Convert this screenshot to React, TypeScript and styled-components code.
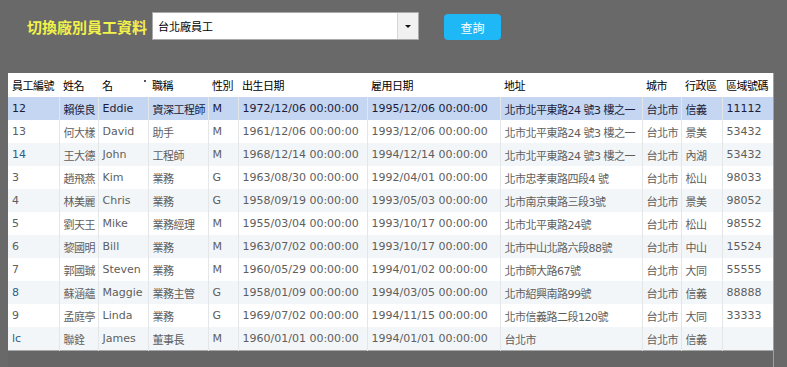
import React, { useState } from "react";
import styled, { createGlobalStyle } from "styled-components";

const GlobalStyle = createGlobalStyle`
  html, body {
    margin: 0;
    padding: 0;
    background: #696969;
    height: 100%;
    overflow: hidden;
  }
  body {
    font-family: "DejaVu Sans", "Noto Sans CJK TC", sans-serif;
  }
`;

const Page = styled.div`
  display: flex;
  flex-direction: column;
  height: 100vh;
  padding-top: 12px;
  box-sizing: border-box;
`;

const Toolbar = styled.div`
  display: flex;
  align-items: center;
  height: 28px;
  padding-left: 27px;
`;

const Title = styled.span`
  font-family: "Noto Sans CJK TC", sans-serif;
  font-size: 15px;
  font-weight: bold;
  color: #f2f24a;
  margin-right: 5px;
`;

const Select = styled.div`
  display: flex;
  width: 267px;
  height: 28px;
  box-sizing: border-box;
  border: 1px solid #a9a9a9;
  background: #fff;
`;

const SelectValue = styled.div`
  flex: 1;
  display: flex;
  align-items: center;
  padding-left: 5px;
  font-family: "Noto Sans CJK TC", sans-serif;
  font-size: 11px;
  color: #000;
`;

const SelectArrow = styled.div`
  width: 20px;
  border-left: 1px solid #d6d6d6;
  background: #f1f1f1;
  display: flex;
  align-items: center;
  justify-content: center;

  &::after {
    content: "";
    border-left: 3px solid transparent;
    border-right: 3px solid transparent;
    border-top: 3px solid #111;
  }
`;

const Button = styled.button`
  margin-left: 25px;
  margin-top: 2px;
  width: 57px;
  height: 26px;
  border: none;
  border-radius: 4px;
  background: #1fb8f6;
  color: #fff;
  font-family: "Noto Sans CJK TC", sans-serif;
  font-size: 12px;
  padding: 0;
`;

const Grid = styled.div`
  margin: 33px 0 0 8px;
  width: 766px;
  flex: 1;
  box-sizing: border-box;
  border-right: 1px solid #a0a0a0;
  background: #666;
  overflow: hidden;
`;

const Table = styled.table`
  width: 765px;
  table-layout: fixed;
  border-collapse: collapse;
  font-size: 11px;
  border-bottom: 1px solid #a8a8a8;
`;

const HeadCell = styled.th`
  height: 24px;
  padding: 0 0 0 4px;
  background: #fff;
  color: #000;
  font-weight: normal;
  text-align: left;
  white-space: nowrap;
  overflow: hidden;
  letter-spacing: -0.5px;
  position: relative;
`;

const SortMark = styled.span`
  position: absolute;
  right: 2px;
  top: 7px;
  width: 2px;
  height: 2px;
  background: #555;
`;

const Row = styled.tr<{ $alt: boolean; $selected: boolean }>`
  background: ${(p) => (p.$selected ? "#c4d6f1" : p.$alt ? "#f3f6f8" : "#fff")};
  color: ${(p) => (p.$selected ? "#1c1c3a" : "#5e5e5e")};
`;

const Cell = styled.td<{ $link?: boolean; $cjk?: boolean }>`
  height: 23px;
  padding: 0 0 0 4px;
  border-left: 1px solid #e4e6e8;
  white-space: nowrap;
  overflow: hidden;
  letter-spacing: ${(p) => (p.$cjk ? "-0.5px" : "normal")};
  color: ${(p) => (p.$link ? "#2f5d8c" : "inherit")};

  &:first-child {
    border-left: none;
  }
`;

const columns = [
  { title: "員工編號", width: 51 },
  { title: "姓名", width: 39, cjk: true },
  { title: "名", width: 50, mark: true },
  { title: "職稱", width: 60, cjk: true },
  { title: "性別", width: 30 },
  { title: "出生日期", width: 129 },
  { title: "雇用日期", width: 133 },
  { title: "地址", width: 142, cjk: true },
  { title: "城市", width: 39, cjk: true },
  { title: "行政區", width: 41, cjk: true },
  { title: "區域號碼", width: 51 },
];

const rows = [
  ["12", "賴俟良", "Eddie", "資深工程師", "M", "1972/12/06 00:00:00", "1995/12/06 00:00:00", "北市北平東路24 號3 樓之一", "台北市", "信義", "11112"],
  ["13", "何大樣", "David", "助手", "M", "1961/12/06 00:00:00", "1993/12/06 00:00:00", "北市北平東路24 號3 樓之一", "台北市", "景美", "53432"],
  ["14", "王大德", "John", "工程師", "M", "1968/12/14 00:00:00", "1994/12/14 00:00:00", "北市北平東路24 號3 樓之一", "台北市", "內湖", "53432"],
  ["3", "趙飛燕", "Kim", "業務", "G", "1963/08/30 00:00:00", "1992/04/01 00:00:00", "北市忠孝東路四段4 號", "台北市", "松山", "98033"],
  ["4", "林美麗", "Chris", "業務", "G", "1958/09/19 00:00:00", "1993/05/03 00:00:00", "北市南京東路三段3號", "台北市", "景美", "98052"],
  ["5", "劉天王", "Mike", "業務經理", "M", "1955/03/04 00:00:00", "1993/10/17 00:00:00", "北市北平東路24號", "台北市", "松山", "98552"],
  ["6", "黎國明", "Bill", "業務", "M", "1963/07/02 00:00:00", "1993/10/17 00:00:00", "北市中山北路六段88號", "台北市", "中山", "15524"],
  ["7", "郭國臹", "Steven", "業務", "M", "1960/05/29 00:00:00", "1994/01/02 00:00:00", "北市師大路67號", "台北市", "大同", "55555"],
  ["8", "蘇涵蘊", "Maggie", "業務主管", "G", "1958/01/09 00:00:00", "1994/03/05 00:00:00", "北市紹興南路99號", "台北市", "信義", "88888"],
  ["9", "孟庭亭", "Linda", "業務", "G", "1969/07/02 00:00:00", "1994/11/15 00:00:00", "北市信義路二段120號", "台北市", "大同", "33333"],
  ["lc", "聯銓", "James", "董事長", "M", "1960/01/01 00:00:00", "1994/01/01 00:00:00", "台北市", "台北市", "信義", ""],
];

const linkIds = new Set(["14", "8", "lc"]);

export default function App() {
  const [selected, setSelected] = useState(0);

  return (
    <>
      <GlobalStyle />
      <Page>
        <Toolbar>
          <Title>切換廠別員工資料</Title>
          <Select>
            <SelectValue>台北廠員工</SelectValue>
            <SelectArrow />
          </Select>
          <Button>查詢</Button>
        </Toolbar>
        <Grid>
          <Table>
            <colgroup>
              {columns.map((c) => (
                <col key={c.title} style={{ width: c.width }} />
              ))}
            </colgroup>
            <thead>
              <tr>
                {columns.map((c) => (
                  <HeadCell key={c.title}>
                    {c.title}
                    {c.mark && <SortMark />}
                  </HeadCell>
                ))}
              </tr>
            </thead>
            <tbody>
              {rows.map((r, i) => (
                <Row
                  key={i}
                  $alt={i % 2 === 0}
                  $selected={i === selected}
                  onClick={() => setSelected(i)}
                >
                  {r.map((v, j) => (
                    <Cell
                      key={j}
                      $cjk={columns[j].cjk}
                      $link={j === 0 && linkIds.has(r[0]) && i !== selected}
                    >
                      {v}
                    </Cell>
                  ))}
                </Row>
              ))}
            </tbody>
          </Table>
        </Grid>
      </Page>
    </>
  );
}
